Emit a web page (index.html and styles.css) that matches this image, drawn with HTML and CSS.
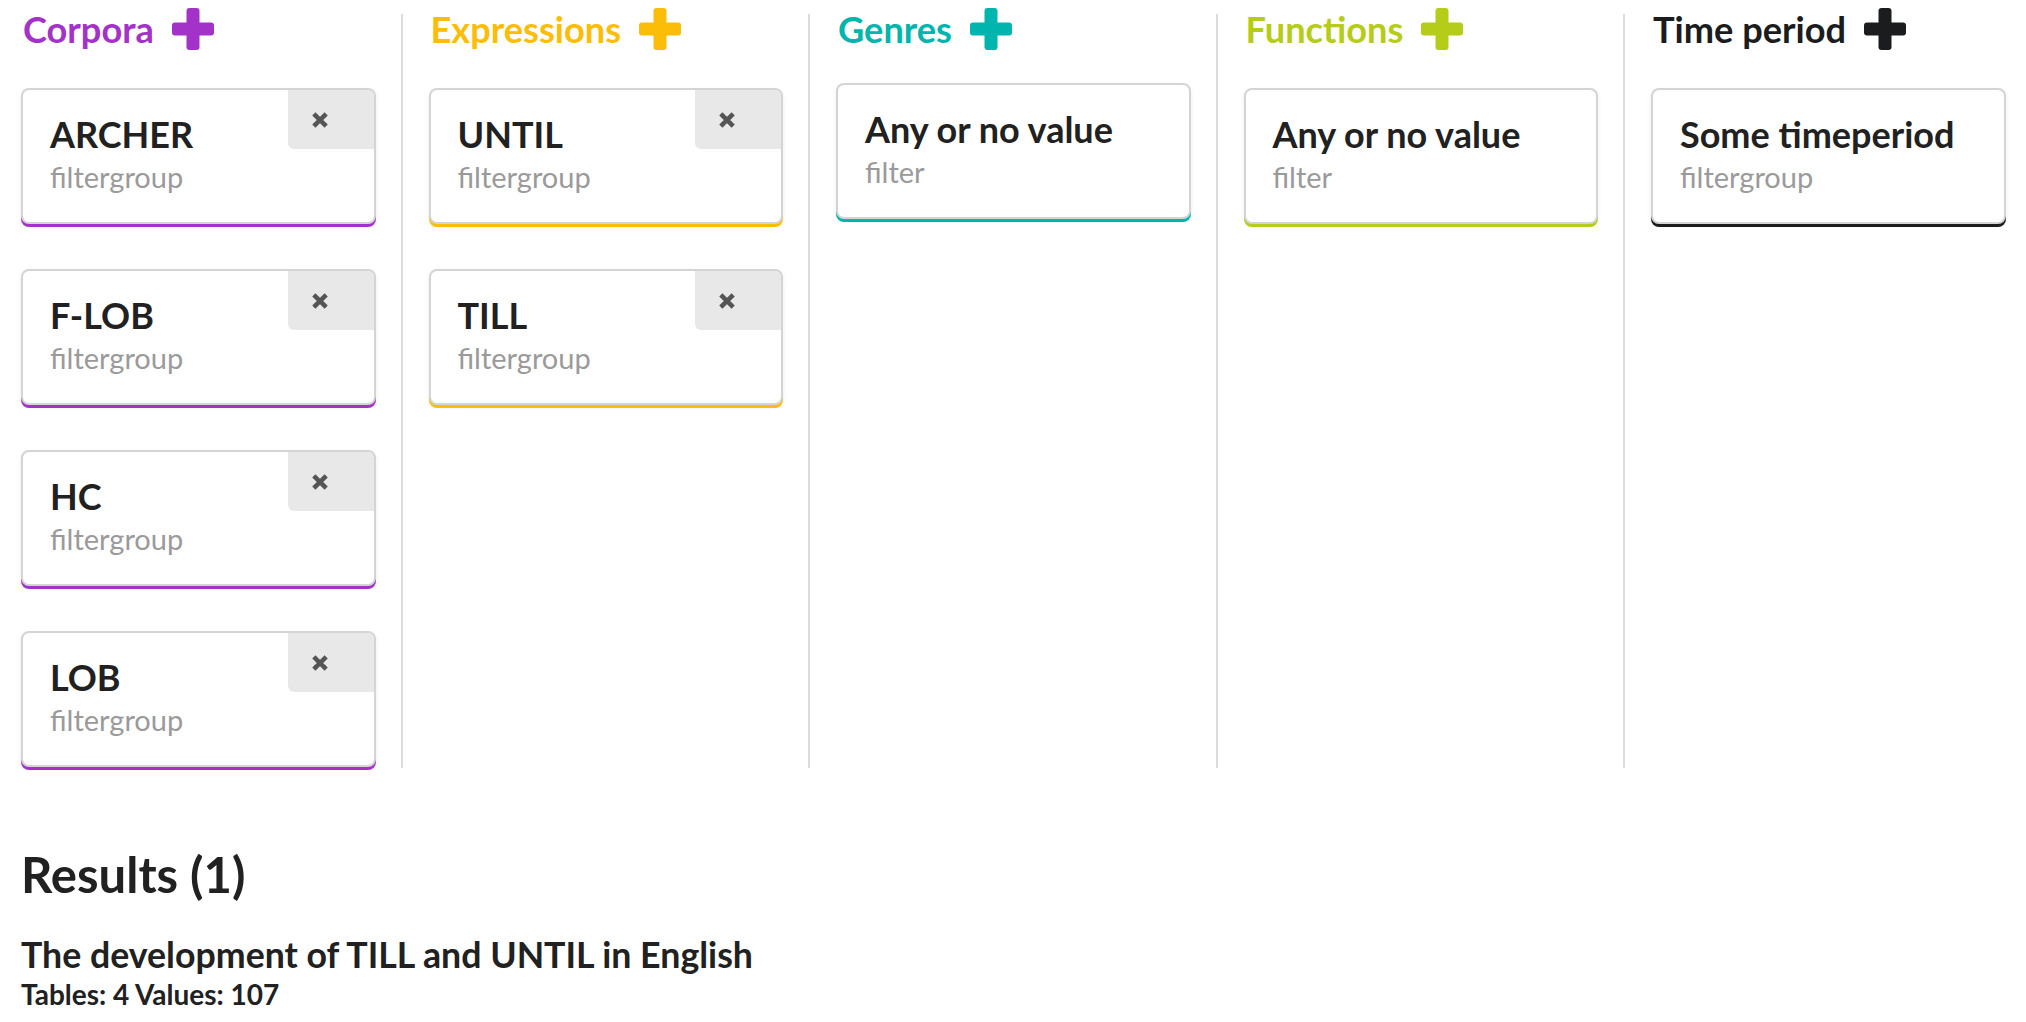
FILE: index.html
```html
<!DOCTYPE html>
<html>
<head>
<meta charset="utf-8">
<link rel="stylesheet" href="styles.css">
</head>
<body>
<div class="page">
  <div class="board">
    <section class="col purple">
      <h3 class="col-head">Corpora <svg class="plus" viewBox="0 0 42 42"><rect x="14.5" y="0" width="13" height="42" rx="3"/><rect x="0" y="14.5" width="42" height="13" rx="3"/></svg></h3>
      <div class="cards">
        <div class="card"><div class="card-title">ARCHER</div><div class="card-meta">filtergroup</div><span class="close"><svg viewBox="0 0 16 16"><path d="M2.5 2.5 L13.5 13.5 M13.5 2.5 L2.5 13.5"/></svg></span></div>
        <div class="card"><div class="card-title">F-LOB</div><div class="card-meta">filtergroup</div><span class="close"><svg viewBox="0 0 16 16"><path d="M2.5 2.5 L13.5 13.5 M13.5 2.5 L2.5 13.5"/></svg></span></div>
        <div class="card"><div class="card-title">HC</div><div class="card-meta">filtergroup</div><span class="close"><svg viewBox="0 0 16 16"><path d="M2.5 2.5 L13.5 13.5 M13.5 2.5 L2.5 13.5"/></svg></span></div>
        <div class="card"><div class="card-title">LOB</div><div class="card-meta">filtergroup</div><span class="close"><svg viewBox="0 0 16 16"><path d="M2.5 2.5 L13.5 13.5 M13.5 2.5 L2.5 13.5"/></svg></span></div>
      </div>
    </section>
    <section class="col yellow">
      <h3 class="col-head">Expressions <svg class="plus" viewBox="0 0 42 42"><rect x="14.5" y="0" width="13" height="42" rx="3"/><rect x="0" y="14.5" width="42" height="13" rx="3"/></svg></h3>
      <div class="cards">
        <div class="card"><div class="card-title">UNTIL</div><div class="card-meta">filtergroup</div><span class="close"><svg viewBox="0 0 16 16"><path d="M2.5 2.5 L13.5 13.5 M13.5 2.5 L2.5 13.5"/></svg></span></div>
        <div class="card"><div class="card-title">TILL</div><div class="card-meta">filtergroup</div><span class="close"><svg viewBox="0 0 16 16"><path d="M2.5 2.5 L13.5 13.5 M13.5 2.5 L2.5 13.5"/></svg></span></div>
      </div>
    </section>
    <section class="col teal">
      <h3 class="col-head">Genres <svg class="plus" viewBox="0 0 42 42"><rect x="14.5" y="0" width="13" height="42" rx="3"/><rect x="0" y="14.5" width="42" height="13" rx="3"/></svg></h3>
      <div class="cards cards-raised">
        <div class="card"><div class="card-title">Any or no value</div><div class="card-meta">filter</div></div>
      </div>
    </section>
    <section class="col olive">
      <h3 class="col-head">Functions <svg class="plus" viewBox="0 0 42 42"><rect x="14.5" y="0" width="13" height="42" rx="3"/><rect x="0" y="14.5" width="42" height="13" rx="3"/></svg></h3>
      <div class="cards">
        <div class="card"><div class="card-title">Any or no value</div><div class="card-meta">filter</div></div>
      </div>
    </section>
    <section class="col black">
      <h3 class="col-head">Time period <svg class="plus" viewBox="0 0 42 42"><rect x="14.5" y="0" width="13" height="42" rx="3"/><rect x="0" y="14.5" width="42" height="13" rx="3"/></svg></h3>
      <div class="cards">
        <div class="card"><div class="card-title">Some timeperiod</div><div class="card-meta">filtergroup</div></div>
      </div>
    </section>
  </div>

  <div class="results">
    <h2 class="results-head">Results (1)</h2>
    <div class="result">
      <div class="result-title">The development of TILL and UNTIL in English</div>
      <div class="result-meta">Tables: 4 Values: 107</div>
    </div>
  </div>
</div>
</body>
</html>
```

FILE: styles.css
```css
html, body {
  margin: 0;
  padding: 0;
  background: #ffffff;
}

body {
  font-family: Lato, "Noto Sans", sans-serif;
  color: #212121;
}

.page {
  padding: 14px 0 0 21px;
}

.board {
  display: flex;
  align-items: stretch;
  height: 754px;
}

.col {
  width: 354.5px;
  padding-right: 25px;
  flex: none;
}

.col + .col {
  border-left: 2px solid #dcdcdc;
  padding-left: 26px;
}

.col-head {
  display: flex;
  align-items: center;
  margin: 0;
  height: 30px;
  line-height: 30px;
  font-size: 36.2px;
  font-weight: 700;
  padding-left: 2px;
}

.plus {
  width: 42px;
  height: 42px;
  margin-left: 18px;
  flex: none;
}

.purple { --accent: #a333c8; }
.yellow { --accent: #fbbd08; }
.teal   { --accent: #00b5ad; }
.olive  { --accent: #b5cc18; }
.black  { --accent: #1b1c1d; }

.col-head { color: var(--accent); }
.plus rect { fill: var(--accent); }

.cards {
  display: flex;
  flex-direction: column;
  gap: 45px;
  margin-top: 44px;
}

.cards-raised {
  margin-top: 39px;
}

.card {
  position: relative;
  border: 2px solid #d4d4d5;
  border-radius: 8px;
  box-shadow: 0 3px 0 0 var(--accent), 0 2px 4px 0 rgba(0,0,0,0.08);
  padding: 22px 27px 27px 27px;
  background: #fff;
}

.card-title {
  font-size: 36px;
  font-weight: 700;
  line-height: 45px;
  color: #212121;
}

.card-meta {
  margin-top: 2px;
  font-size: 29px;
  line-height: 36px;
  color: #9a9a9a;
}

.close {
  position: absolute;
  top: 0;
  right: 0;
  width: 86px;
  height: 59px;
  background: #e8e8e8;
  border-top-right-radius: 6px;
  border-bottom-left-radius: 6px;
}

.close svg {
  position: absolute;
  left: 23px;
  top: 21px;
  width: 18px;
  height: 18px;
}

.close path {
  stroke: #555;
  stroke-width: 4;
  fill: none;
}

.results {
  padding-top: 78px;
}

.results-head {
  margin: 0;
  font-size: 49px;
  line-height: 56px;
  font-weight: 700;
  color: #212121;
}

.result {
  margin-top: 31px;
}

.result-title {
  font-size: 35.7px;
  line-height: 44px;
  font-weight: 700;
  color: #212121;
}

.result-meta {
  font-size: 28px;
  line-height: 34px;
  font-weight: 700;
  color: #212121;
}
```
